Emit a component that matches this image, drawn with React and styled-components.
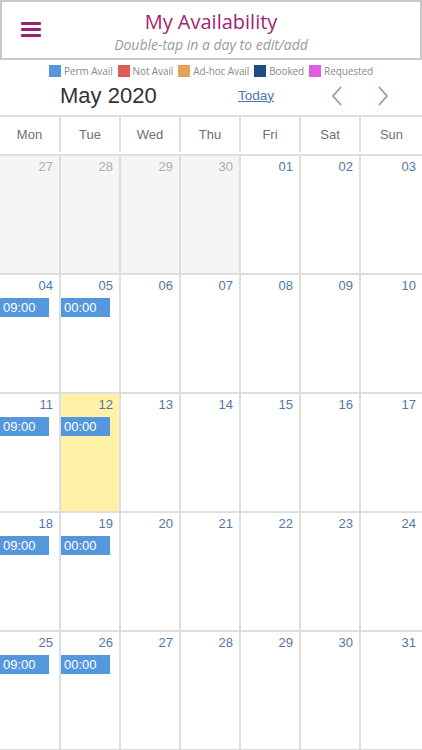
import React from "react";
import styled, { createGlobalStyle } from "styled-components";

const GlobalStyle = createGlobalStyle`
  html, body {
    margin: 0;
    padding: 0;
    background: #fff;
  }
  body {
    font-family: "Liberation Sans", Arial, sans-serif;
  }
`;

const legend = [
  { label: "Perm Avail", color: "#5597dd" },
  { label: "Not Avail", color: "#e05a5a" },
  { label: "Ad-hoc Avail", color: "#e6a05c" },
  { label: "Booked", color: "#1f4b87" },
  { label: "Requested", color: "#e05ce0" },
];

const dayNames = ["Mon", "Tue", "Wed", "Thu", "Fri", "Sat", "Sun"];

const pad = (n) => String(n).padStart(2, "0");

const buildWeeks = () => {
  const days = [];
  [27, 28, 29, 30].forEach((d) => days.push({ day: d, other: true }));
  for (let d = 1; d <= 31; d++) days.push({ day: d });
  const weeks = [];
  for (let i = 0; i < days.length; i += 7) weeks.push(days.slice(i, i + 7));
  return weeks;
};

const events = {
  4: "09:00",
  5: "00:00",
  11: "09:00",
  12: "00:00",
  18: "09:00",
  19: "00:00",
  25: "09:00",
  26: "00:00",
};

const App = () => {
  const weeks = buildWeeks();
  return (
    <Page>
      <GlobalStyle />
      <Header>
        <Burger aria-label="menu">
          <span />
          <span />
          <span />
        </Burger>
        <Title>My Availability</Title>
        <Subtitle>Double-tap in a day to edit/add</Subtitle>
      </Header>

      <Legend>
        {legend.map((l) => (
          <LegendItem key={l.label}>
            <Swatch color={l.color} />
            {l.label}
          </LegendItem>
        ))}
      </Legend>

      <Toolbar>
        <Month>May 2020</Month>
        <TodayLink>Today</TodayLink>
        <Arrows>
          <ArrowBtn>
            <svg width="12" height="20" viewBox="0 0 12 20">
              <path d="M10 1 L2 10 L10 19" fill="none" stroke="#7f9dc6" strokeWidth="1.6" />
            </svg>
          </ArrowBtn>
          <ArrowBtn>
            <svg width="12" height="20" viewBox="0 0 12 20">
              <path d="M2 1 L10 10 L2 19" fill="none" stroke="#7f9dc6" strokeWidth="1.6" />
            </svg>
          </ArrowBtn>
        </Arrows>
      </Toolbar>

      <DayHeader>
        {dayNames.map((d) => (
          <DayName key={d}>{d}</DayName>
        ))}
      </DayHeader>

      <Grid>
        {weeks.map((week, wi) =>
          week.map((c, ci) => (
            <Cell
              key={`${wi}-${ci}`}
              $other={c.other}
              $today={!c.other && c.day === 12}
              $last={ci === 6}
            >
              <DayNum $other={c.other}>{pad(c.day)}</DayNum>
              {!c.other && events[c.day] && <Event>{events[c.day]}</Event>}
            </Cell>
          ))
        )}
      </Grid>
    </Page>
  );
};

export default App;

const Page = styled.div`
  width: 422px;
  height: 750px;
  overflow: hidden;
  background: #fff;
`;

const Header = styled.header`
  position: relative;
  box-sizing: border-box;
  height: 60px;
  padding-top: 2px;
  border: 2px solid #c9c9c9;
  display: flex;
  flex-direction: column;
  align-items: center;
  justify-content: center;
  font-family: "Open Sans", sans-serif;
`;

const Burger = styled.div`
  position: absolute;
  left: 19px;
  top: 20px;
  width: 20px;
  display: flex;
  flex-direction: column;
  gap: 3px;

  span {
    display: block;
    height: 3px;
    border-radius: 1px;
    background: #9c1f6f;
  }
`;

const Title = styled.div`
  font-size: 20px;
  line-height: 1.37;
  color: #a21f73;
`;

const Subtitle = styled.div`
  font-size: 14px;
  line-height: 1.37;
  font-style: italic;
  color: #9a9a9a;
`;

const Legend = styled.div`
  height: 22px;
  display: flex;
  align-items: center;
  justify-content: center;
  gap: 5px;
  font-family: "Open Sans", sans-serif;
  font-size: 10px;
  letter-spacing: -0.1px;
  color: #8a8a8a;
`;

const LegendItem = styled.div`
  display: flex;
  align-items: center;
  gap: 3px;
`;

const Swatch = styled.span`
  width: 12px;
  height: 12px;
  background: ${(p) => p.color};
`;

const Toolbar = styled.div`
  height: 33px;
  display: flex;
  align-items: center;
`;

const Month = styled.div`
  margin-left: 60px;
  width: 178px;
  font-size: 22px;
  color: #333;
  margin-top: -6px;
`;

const TodayLink = styled.a`
  font-size: 13.5px;
  color: #4d78aa;
  text-decoration: underline;
  margin-top: -7px;
`;

const Arrows = styled.div`
  margin-left: 57px;
  display: flex;
  gap: 34px;
  margin-top: -6px;
`;

const ArrowBtn = styled.span`
  display: flex;
  width: 12px;
  height: 20px;
`;

const columns = "61px repeat(5, 60px) 1fr";

const DayHeader = styled.div`
  display: grid;
  grid-template-columns: ${columns};
  border-top: 2px solid #dedede;
  height: 35px;
`;

const DayName = styled.div`
  display: flex;
  align-items: center;
  justify-content: center;
  border-right: 2px solid #dedede;
  font-size: 13px;
  color: #6f6f6f;
  &:last-child {
    border-right: none;
  }
`;

const Grid = styled.div`
  margin-top: 2px;
  display: grid;
  grid-template-columns: ${columns};
  grid-auto-rows: 119px;
  border-top: 2px solid #dedede;
`;

const Cell = styled.div`
  box-sizing: border-box;
  display: flex;
  flex-direction: column;
  align-items: stretch;
  border-right: ${(p) => (p.$last ? "none" : "2px solid #dedede")};
  border-bottom: 2px solid #dedede;
  background: ${(p) => (p.$today ? "#fff2a6" : p.$other ? "#f5f5f5" : "#fff")};
`;

const DayNum = styled.div`
  text-align: right;
  padding: 3px 6px 0 0;
  height: 20px;
  font-size: 13px;
  line-height: 16px;
  color: ${(p) => (p.$other ? "#adadad" : "#5577a3")};
`;

const Event = styled.div`
  width: 49px;
  height: 19px;
  box-sizing: border-box;
  padding-left: 3px;
  background: #5597dd;
  color: #fff;
  font-size: 13px;
  line-height: 19px;
`;
